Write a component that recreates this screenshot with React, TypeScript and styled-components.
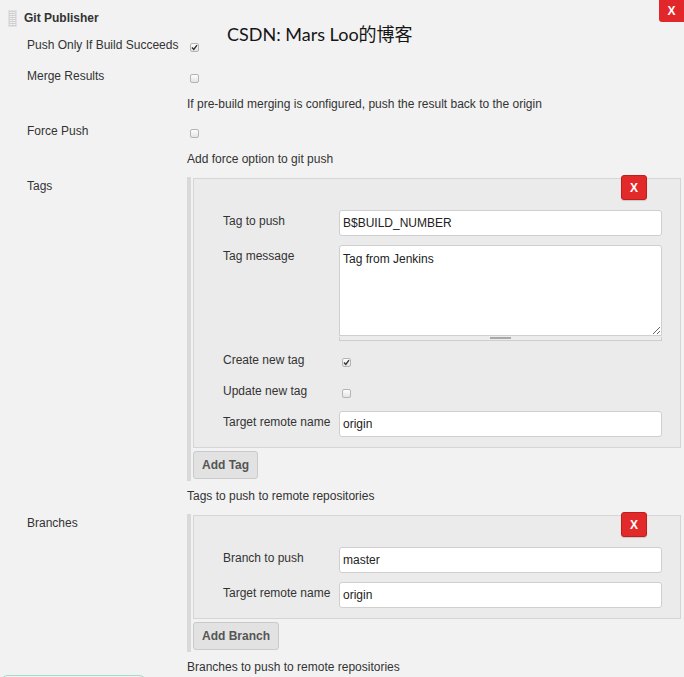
import React from "react";
import styled, { createGlobalStyle } from "styled-components";

const GlobalStyle = createGlobalStyle`
  html, body {
    margin: 0;
    padding: 0;
    background: #f2f2f2;
    overflow: hidden;
  }
  body {
    font-family: "Liberation Sans", Helvetica, Arial, sans-serif;
    font-size: 12px;
    color: #333;
  }
`;

const Page = styled.div`
  position: relative;
  height: 677px;
  overflow: hidden;
  padding-top: 9px;
  box-sizing: border-box;
`;

const Header = styled.div`
  display: flex;
  align-items: center;
  gap: 7px;
  height: 18px;
  padding-left: 8px;
`;

const Handle = styled.span`
  width: 9px;
  height: 17px;
  background-image: linear-gradient(to bottom, #d0d0d0 1px, transparent 1px),
    linear-gradient(to right, #dcdcdc 1px, transparent 1px);
  background-size: 3px 2px;
  border: 1px solid #e2e2e2;
  box-sizing: border-box;
`;

const Title = styled.span`
  font-weight: bold;
  color: #333;
`;

const Watermark = styled.div`
  position: absolute;
  left: 227px;
  top: 23px;
  font-family: Lato, "Noto Sans CJK SC", sans-serif;
  font-size: 18px;
  line-height: 22px;
  color: #151515;
`;

const CornerClose = styled.div`
  position: absolute;
  top: 0;
  right: 0;
  width: 25px;
  height: 22px;
  background: #e2272a;
  border-radius: 0 0 0 3px;
  color: #fff;
  font-weight: bold;
  display: flex;
  align-items: center;
  justify-content: center;
`;

const Form = styled.div`
  padding: 0 3px 0 27px;
`;

const Row = styled.div<{ $mt: number }>`
  display: grid;
  grid-template-columns: 160px 1fr;
  margin-top: ${(p) => p.$mt}px;
  line-height: 14px;
`;

const Label = styled.div<{ $pt?: number }>`
  padding-top: ${(p) => p.$pt ?? 0}px;
  color: #333;
`;

const Desc = styled.div<{ $mt: number }>`
  margin: ${(p) => p.$mt}px 0 0 160px;
  line-height: 14px;
  color: #333;
`;

const Box = styled.span`
  display: flex;
  align-items: center;
  justify-content: center;
  width: 9px;
  height: 9px;
  margin: 5px 0 0 3px;
  border: 1px solid #b4b4b4;
  border-radius: 2px;
  background: linear-gradient(#fdfdfd, #e4e4e4);
  box-sizing: border-box;
`;

const Repeat = styled.div`
  border-left: 4px solid #d9d9d9;
  padding: 1px 0 2px 2px;
`;

const Chunk = styled.div`
  background: #ebebeb;
  border: 1px solid #d5d5d5;
  padding-bottom: 10px;
`;

const DeleteRow = styled.div`
  display: flex;
  justify-content: flex-end;
  padding-right: 33px;
  margin-top: -4px;
`;

const DeleteButton = styled.div`
  width: 26px;
  height: 25px;
  box-sizing: border-box;
  background: #e32a2a;
  border: 1px solid #c01d1d;
  border-radius: 3px;
  box-shadow: 0 1px 1px rgba(0, 0, 0, 0.15);
  color: #fff;
  font-weight: bold;
  display: flex;
  align-items: center;
  justify-content: center;
`;

const Field = styled.div<{ $mt: number }>`
  display: grid;
  grid-template-columns: 116px 1fr;
  margin-top: ${(p) => p.$mt}px;
  padding: 0 18px 0 29px;
  line-height: 14px;
`;

const TextInput = styled.input`
  height: 26px;
  width: 100%;
  box-sizing: border-box;
  border: 1px solid #cfcfcf;
  border-radius: 3px;
  background: #fff;
  padding: 0 3px;
  font-family: inherit;
  font-size: 12px;
  color: #222;
  outline: none;
`;

const AreaWrap = styled.div`
  display: flex;
  flex-direction: column;
`;

const TextArea = styled.textarea`
  display: block;
  height: 91px;
  width: 100%;
  box-sizing: border-box;
  border: 1px solid #cfcfcf;
  border-radius: 3px 3px 0 0;
  background: #fff;
  padding: 6px 3px 0;
  font-family: inherit;
  font-size: 12px;
  line-height: 14px;
  color: #222;
  resize: vertical;
  outline: none;
`;

const Grip = styled.div`
  height: 4px;
  margin-top: 1px;
  border: 1px solid #cdcdcd;
  border-top: none;
  background: #ececec;
  display: flex;
  justify-content: center;
  box-sizing: border-box;

  &::after {
    content: "";
    width: 21px;
    height: 2px;
    background: #a8a8a8;
  }
`;

const AddButton = styled.button`
  display: block;
  margin-top: 3px;
  height: 28px;
  padding: 0 8px;
  border: 1px solid #cacaca;
  border-radius: 3px;
  background: #e2e2e2;
  font-family: inherit;
  font-size: 12px;
  font-weight: bold;
  color: #555;
`;

const FooterBar = styled.div`
  margin-top: 1px;
  width: 147px;
  height: 20px;
  border: 1px solid #a3dec7;
  border-radius: 8px 8px 0 0;
  box-sizing: border-box;
`;

const Check = ({ checked }: { checked?: boolean }) => (
  <Box>
    {checked && (
      <svg width="7" height="7" viewBox="0 0 7 7">
        <path
          d="M1 3.6 L2.8 5.4 L6 1.2"
          fill="none"
          stroke="#333"
          strokeWidth="1.4"
        />
      </svg>
    )}
  </Box>
);

export default function App() {
  return (
    <Page>
      <GlobalStyle />
      <Header>
        <Handle />
        <Title>Git Publisher</Title>
      </Header>
      <Watermark>CSDN: Mars Loo的博客</Watermark>
      <CornerClose>X</CornerClose>

      <Form>
        <Row $mt={11}>
          <Label>Push Only If Build Succeeds</Label>
          <div>
            <Check checked />
          </div>
        </Row>
        <Row $mt={17}>
          <Label>Merge Results</Label>
          <div>
            <Check />
          </div>
        </Row>
        <Desc $mt={14}>
          If pre-build merging is configured, push the result back to the
          origin
        </Desc>
        <Row $mt={13}>
          <Label>Force Push</Label>
          <div>
            <Check />
          </div>
        </Row>
        <Desc $mt={14}>Add force option to git push</Desc>

        <Row $mt={11}>
          <Label $pt={2}>Tags</Label>
          <Repeat>
            <Chunk>
              <DeleteRow>
                <DeleteButton>X</DeleteButton>
              </DeleteRow>
              <Field $mt={10}>
                <Label $pt={4}>Tag to push</Label>
                <TextInput readOnly value="B$BUILD_NUMBER" />
              </Field>
              <Field $mt={9}>
                <Label $pt={4}>Tag message</Label>
                <AreaWrap>
                  <TextArea readOnly value="Tag from Jenkins" />
                  <Grip />
                </AreaWrap>
              </Field>
              <Field $mt={12}>
                <Label>Create new tag</Label>
                <div>
                  <Check checked />
                </div>
              </Field>
              <Field $mt={17}>
                <Label>Update new tag</Label>
                <div>
                  <Check />
                </div>
              </Field>
              <Field $mt={13}>
                <Label $pt={4}>Target remote name</Label>
                <TextInput readOnly value="origin" />
              </Field>
            </Chunk>
            <AddButton>Add Tag</AddButton>
          </Repeat>
        </Row>
        <Desc $mt={8}>Tags to push to remote repositories</Desc>

        <Row $mt={11}>
          <Label $pt={2}>Branches</Label>
          <Repeat>
            <Chunk>
              <DeleteRow>
                <DeleteButton>X</DeleteButton>
              </DeleteRow>
              <Field $mt={10}>
                <Label $pt={4}>Branch to push</Label>
                <TextInput readOnly value="master" />
              </Field>
              <Field $mt={9}>
                <Label $pt={4}>Target remote name</Label>
                <TextInput readOnly value="origin" />
              </Field>
            </Chunk>
            <AddButton>Add Branch</AddButton>
          </Repeat>
        </Row>
        <Desc $mt={8}>Branches to push to remote repositories</Desc>
      </Form>
      <FooterBar />
    </Page>
  );
}
